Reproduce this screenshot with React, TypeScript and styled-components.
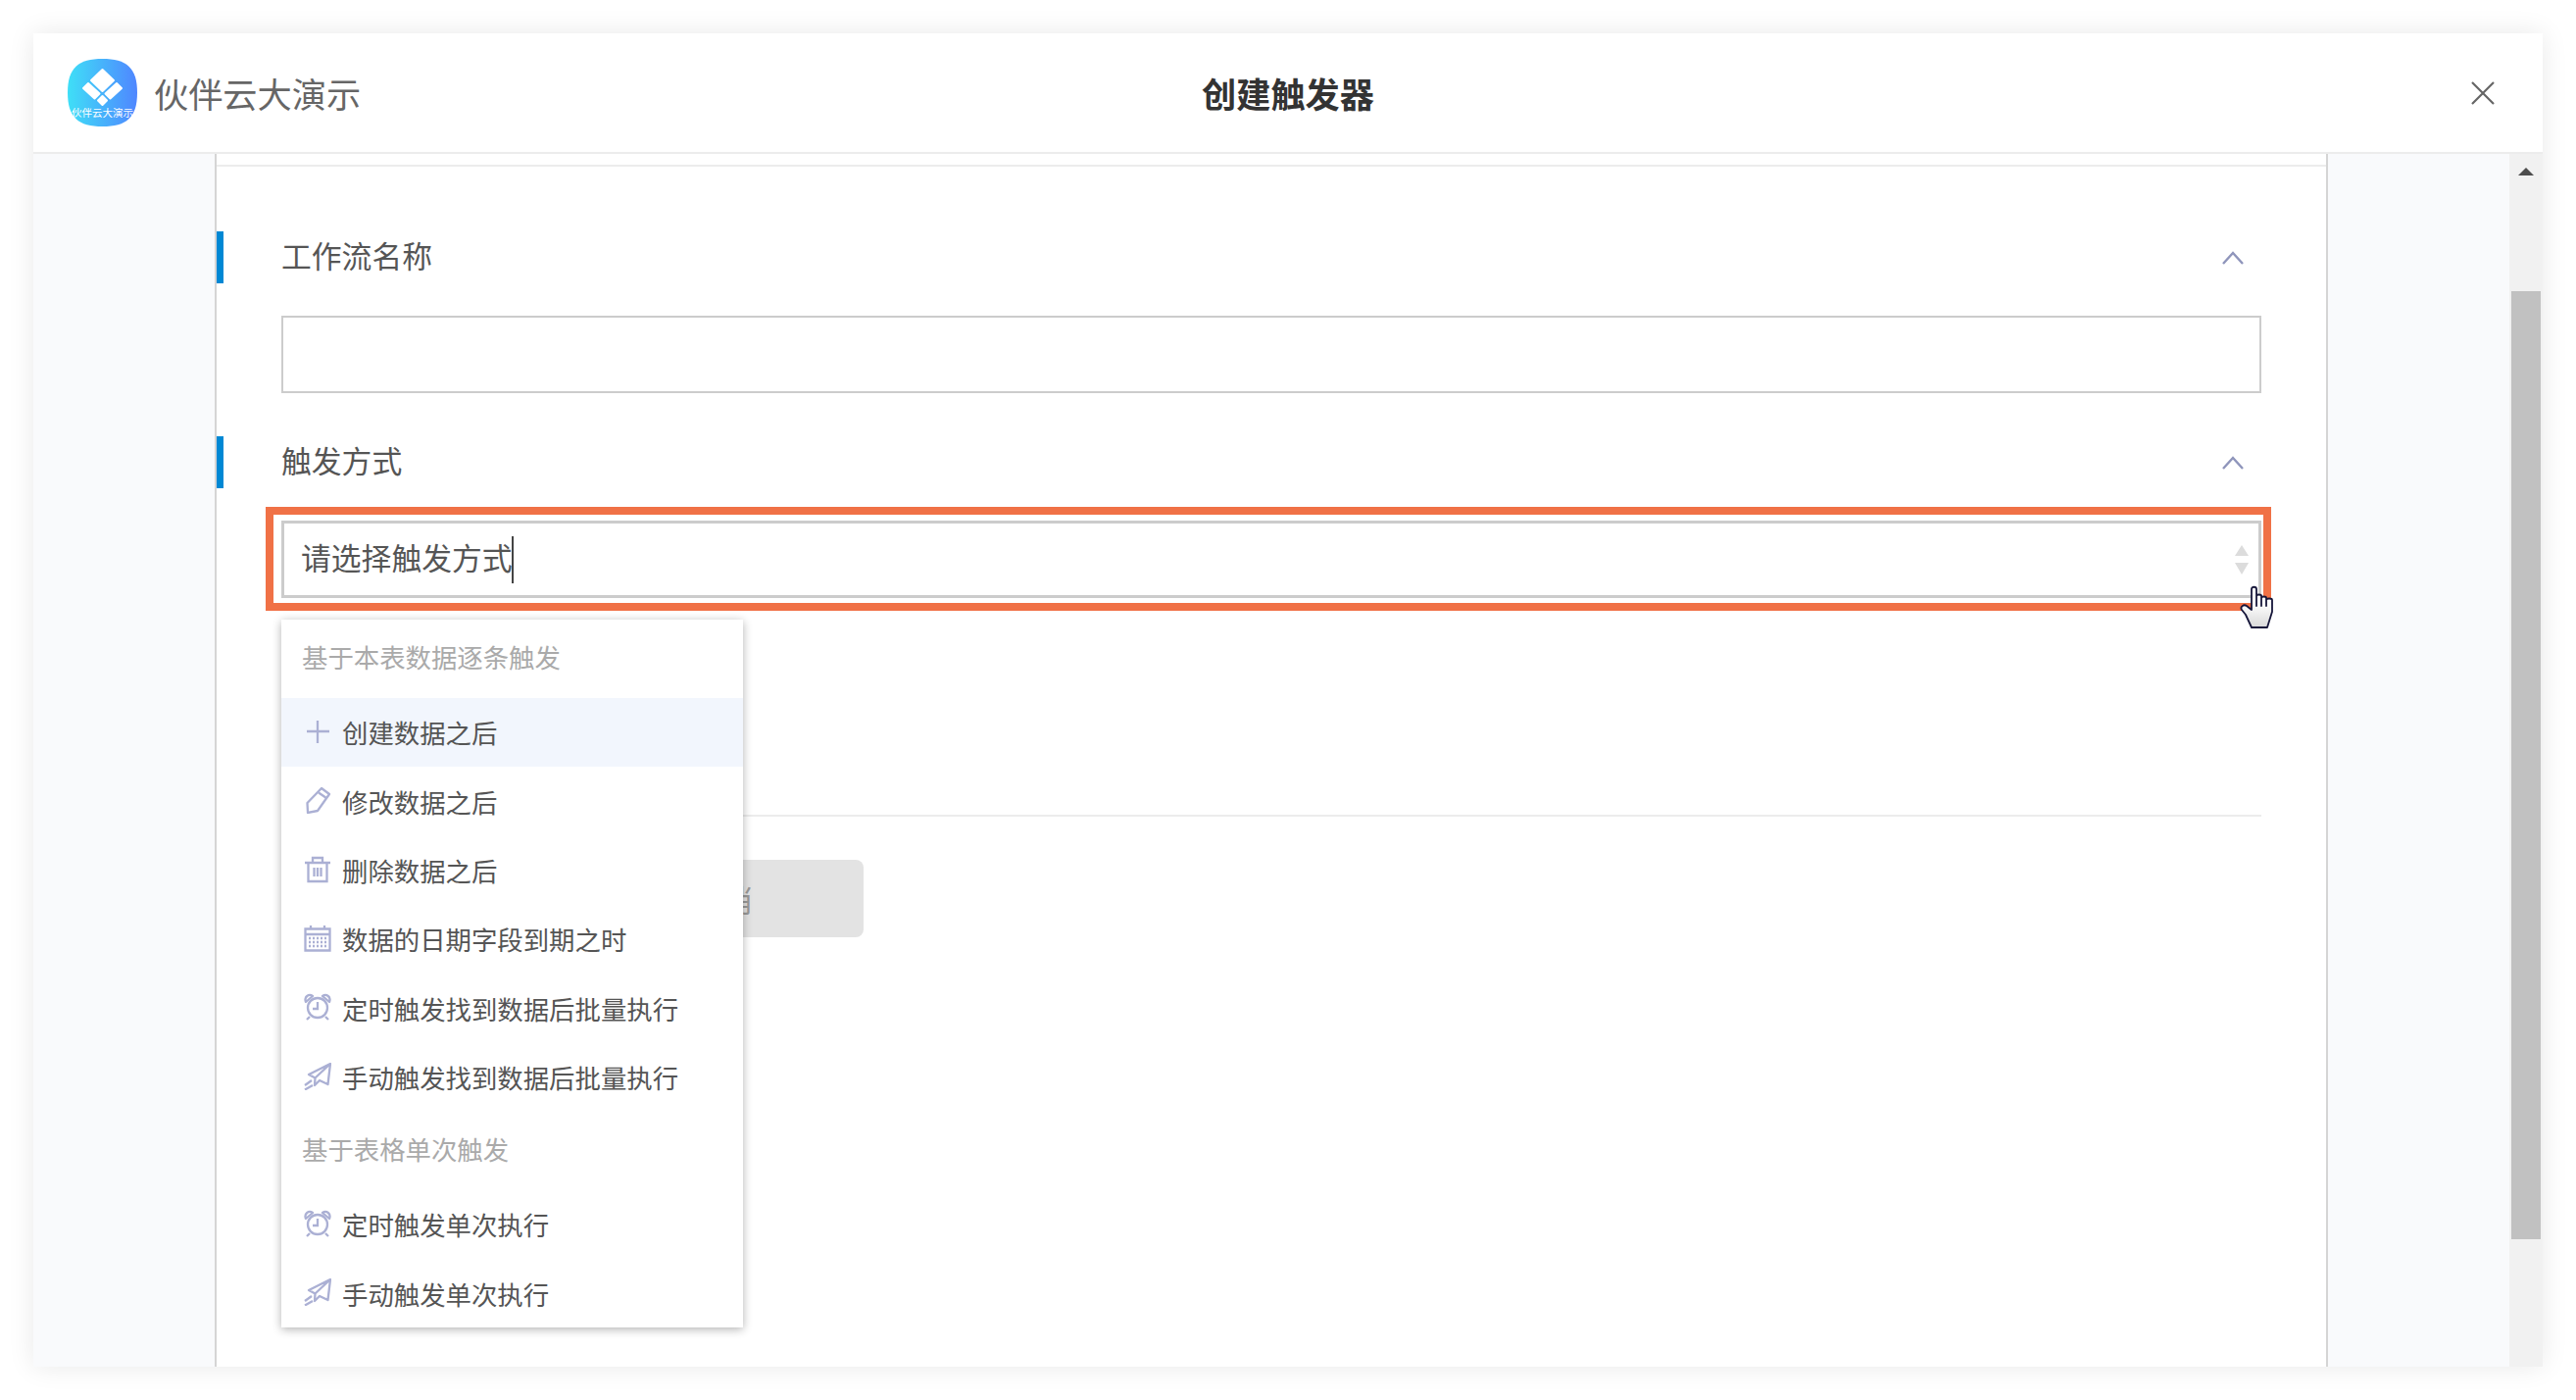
import React from 'react';
import styled, { createGlobalStyle } from 'styled-components';

const GlobalStyle = createGlobalStyle`
  html, body { margin: 0; padding: 0; background: #fff; }
  body { font-family: "Noto Sans CJK SC", "Liberation Sans", sans-serif; overflow: hidden; }
`;

const Page = styled.div`
  box-sizing: border-box;
  width: 2628px;
  height: 1428px;
  padding: 34px;
  overflow: hidden;
`;
const Win = styled.div`
  display: flex;
  flex-direction: column;
  height: 1360px;
  background: #fff;
  box-shadow: 0 0 26px rgba(0, 0, 0, 0.09);
`;
const Header = styled.header`
  box-sizing: border-box;
  height: 123px;
  flex: none;
  display: grid;
  grid-template-columns: 1fr auto 1fr;
  align-items: center;
  padding: 0 49px;
  border-bottom: 2px solid #ececec;
`;
const Brand = styled.div`
  display: flex;
  align-items: center;
  gap: 17px;
  margin-left: -14px;
  font-size: 35.2px;
  color: #666;
`;
const Title = styled.h1`
  margin: 0;
  font-size: 35.2px;
  font-weight: 700;
  color: #333;
`;
const CloseBtn = styled.div`
  justify-self: end;
  display: flex;
`;
const Body = styled.div`
  flex: 1;
  min-height: 0;
  display: flex;
`;
const Canvas = styled.main`
  flex: 1;
  background: #f9fafc;
  padding: 0 185px;
  overflow: hidden;
`;
const Panel = styled.div`
  box-sizing: border-box;
  height: 100%;
  background: #fff;
  border-left: 2px solid #d5d5d5;
  border-right: 2px solid #d5d5d5;
  padding-top: 11px;
`;
const PanelInner = styled.div`
  border-top: 2px solid #ececec;
  padding: 66px 66px 0 66px;
`;
const SectionHead = styled.div`
  height: 53px;
  margin-left: -66px;
  padding: 0 18px 0 59px;
  border-left: 7px solid #0088d4;
  display: flex;
  align-items: center;
  justify-content: space-between;
  font-size: 30.8px;
  color: #555;
`;
const SectionTitle = styled.span`
  padding-bottom: 6px;
`;
const TextBox = styled.div`
  box-sizing: border-box;
  height: 79px;
  margin: 33px 0 44px;
  border: 2px solid #ccc;
`;
const SelectBox = styled.div`
  position: relative;
  box-sizing: border-box;
  height: 79px;
  margin-top: 33px;
  border: 3px solid #ccc;
  display: flex;
  align-items: center;
  justify-content: space-between;
  padding: 0 10px 0 17px;
  font-size: 30.8px;
  color: #555;
`;
const Placeholder = styled.div`
  display: flex;
  align-items: center;
`;
const PlaceholderText = styled.span`
  padding-bottom: 6px;
`;
const Caret = styled.span`
  width: 2px;
  height: 48px;
  margin-left: -1px;
  background: #444;
`;
const Highlight = styled.div`
  position: absolute;
  left: -19px;
  right: -13px;
  top: -17px;
  bottom: -16px;
  border: 8px solid #f07146;
  pointer-events: none;
`;
const Hand = styled.svg`
  position: absolute;
  right: -17px;
  bottom: -34px;
`;
const Dropdown = styled.div`
  position: absolute;
  left: -3px;
  top: 98px;
  width: 471px;
  background: #fff;
  box-shadow: 0 2px 9px rgba(0, 0, 0, 0.3);
  z-index: 2;
`;
const GroupLabel = styled.div`
  height: 79.6px;
  line-height: 76px;
  padding-left: 21px;
  font-size: 26.4px;
  color: #aaa;
`;
const Item = styled.div<{ $active?: boolean }>`
  height: 70.4px;
  display: flex;
  align-items: center;
  padding-left: 23px;
  font-size: 26.4px;
  color: #555;
  background: ${p => (p.$active ? '#f2f6fd' : '#fff')};
`;
const ItemIcon = styled.svg`
  width: 28px;
  height: 28px;
  margin-right: 11px;
  margin-top: -2px;
  flex: none;
  fill: none;
  stroke: #abb0d4;
  stroke-width: 2.3;
`;
const Divider = styled.div`
  height: 2px;
  margin-top: 221px;
  background: #ececec;
`;
const Buttons = styled.div`
  display: flex;
  padding-left: 306px;
  margin-top: 44px;
`;
const Btn = styled.div`
  width: 288px;
  height: 79px;
  border-radius: 8px;
  display: flex;
  align-items: center;
  justify-content: center;
  font-size: 30.8px;
  color: #999;
  background: #e3e3e3;
`;
const Track = styled.div`
  width: 34px;
  flex: none;
  background: #f1f1f1;
  padding: 14px 2px 0;
  box-sizing: border-box;
  display: flex;
  flex-direction: column;
  align-items: center;
`;
const ArrowUp = styled.div`
  width: 0;
  height: 0;
  border-left: 8px solid transparent;
  border-right: 8px solid transparent;
  border-bottom: 8px solid #4d4d4d;
`;
const Thumb = styled.div`
  width: 30px;
  height: 967px;
  margin-top: 118px;
  background: #c1c1c1;
`;

const Logo = () => (
  <svg width="71" height="69" viewBox="0 0 71 69">
    <defs>
      <linearGradient id="logoFill" x1="0" x2="1" y1="0" y2="0">
        <stop offset="0" stopColor="#3fdff7" />
        <stop offset="1" stopColor="#4f86ff" />
      </linearGradient>
    </defs>
    <path d="M35.500 0C60 0 71 9 71 34.500S60 69 35.500 69 0 60 0 34.500 11 0 35.500 0Z" fill="url(#logoFill)" />
    <g fill="#fff" stroke="#fff" strokeWidth="2" strokeLinejoin="round">
      <path d="M35.500 11L47 22 35.500 33 24 22Z" />
      <path d="M21 25L32.500 35.500 27.500 40.500 16 30Z" />
      <path d="M50 25L38.500 35.500 43.500 40.500 55 30Z" />
      <path d="M35.500 38L40 42.500 35.500 47 31 42.500Z" />
    </g>
    <text x="35.500" y="59" fontSize="10.500" fill="#fff" textAnchor="middle" fontFamily="Noto Sans CJK SC, sans-serif">伙伴云大演示</text>
  </svg>
);

const Chevron = () => (
  <svg width="22" height="14" viewBox="0 0 22 14" fill="none" stroke="#8f95bb" strokeWidth="2.400">
    <path d="M1 13L11 2L21 13" />
  </svg>
);

const SortArrows = () => (
  <svg width="14" height="30" viewBox="0 0 14 30" fill="#dcdcdc">
    <path d="M7 0L14 11H0Z" />
    <path d="M0 18H14L7 30Z" />
  </svg>
);

const PlusIcon = () => (
  <ItemIcon viewBox="0 0 28 28"><path d="M14 3V26M3 14H26" /></ItemIcon>
);
const PenIcon = () => (
  <ItemIcon viewBox="0 0 28 28">
    <path d="M18 2L26 8 14 25 4 27 3.500 17Z" strokeLinejoin="round" />
    <path d="M15 6.500L23 12" />
  </ItemIcon>
);
const TrashIcon = () => (
  <ItemIcon viewBox="0 0 28 28">
    <path d="M1 7H27M9 6V2H19V6M4.500 7V26H23.500V7" />
    <path d="M10.500 12V21M14 12V21M17.500 12V21" />
  </ItemIcon>
);
const CalendarIcon = () => (
  <ItemIcon viewBox="0 0 28 28">
    <path d="M1.500 4.500H26.500V26.500H1.500ZM1.500 10H26.500M7 1V5M21 1V5" />
    <path d="M5 14H23M5 18H23M5 22H23" strokeDasharray="2 2" />
  </ItemIcon>
);
const AlarmIcon = () => (
  <ItemIcon viewBox="0 0 28 28">
    <circle cx="14" cy="15" r="10" />
    <path d="M14 9V16H9M6 24L3 27M22 24L25 27" />
    <path d="M2 9C0 4 5 0 9 3ZM26 9C28 4 23 0 19 3Z" strokeLinejoin="round" />
  </ItemIcon>
);
const PlaneIcon = () => (
  <ItemIcon viewBox="0 0 28 28">
    <path d="M27 1L24.500 22 16 18 11 23 11.500 15.500 5 12ZM27 1L11.500 15.500" strokeLinejoin="round" />
    <path d="M8 18L1 23M9 23L1 27.500" />
  </ItemIcon>
);

const HandCursor = () => (
  <Hand width="36" height="44" viewBox="0 0 36 44">
    <defs>
      <linearGradient id="handFill" x1="0" x2="0" y1="0" y2="1">
        <stop offset="0.400" stopColor="#fff" />
        <stop offset="1" stopColor="#d8d8d8" />
      </linearGradient>
    </defs>
    <path
      d="M12 4C12 1 17 1 17 4V21V11C17 9 22 9 22 11V21V13C22 11 27 11 27 13V21V15C27 13 33 13 33 15V27L28 43H12L6 30L2 25C0 22 4 19 7 21L12 25Z"
      fill="url(#handFill)"
      stroke="#16163a"
      strokeWidth="1.800"
      strokeLinejoin="round"
    />
  </Hand>
);

const recordItems = [
  { icon: <PlusIcon />, label: '创建数据之后', active: true },
  { icon: <PenIcon />, label: '修改数据之后' },
  { icon: <TrashIcon />, label: '删除数据之后' },
  { icon: <CalendarIcon />, label: '数据的日期字段到期之时' },
  { icon: <AlarmIcon />, label: '定时触发找到数据后批量执行' },
  { icon: <PlaneIcon />, label: '手动触发找到数据后批量执行' },
];
const tableItems = [
  { icon: <AlarmIcon />, label: '定时触发单次执行' },
  { icon: <PlaneIcon />, label: '手动触发单次执行' },
];

export default function App() {
  return (
    <Page>
      <GlobalStyle />
      <Win>
        <Header>
          <Brand><Logo />伙伴云大演示</Brand>
          <Title>创建触发器</Title>
          <CloseBtn>
            <svg width="24" height="24" viewBox="0 0 24 24" stroke="#666" strokeWidth="2.200">
              <path d="M1 1L23 23M23 1L1 23" />
            </svg>
          </CloseBtn>
        </Header>
        <Body>
          <Canvas>
            <Panel>
              <PanelInner>
                <SectionHead><SectionTitle>工作流名称</SectionTitle><Chevron /></SectionHead>
                <TextBox />
                <SectionHead><SectionTitle>触发方式</SectionTitle><Chevron /></SectionHead>
                <SelectBox>
                  <Placeholder><PlaceholderText>请选择触发方式</PlaceholderText><Caret /></Placeholder>
                  <SortArrows />
                  <Highlight />
                  <HandCursor />
                  <Dropdown>
                    <GroupLabel>基于本表数据逐条触发</GroupLabel>
                    {recordItems.map(it => (
                      <Item key={it.label} $active={it.active}>{it.icon}{it.label}</Item>
                    ))}
                    <GroupLabel>基于表格单次触发</GroupLabel>
                    {tableItems.map(it => (
                      <Item key={it.label}>{it.icon}{it.label}</Item>
                    ))}
                  </Dropdown>
                </SelectBox>
                <Divider />
                <Buttons>
                  <Btn>取消</Btn>
                </Buttons>
              </PanelInner>
            </Panel>
          </Canvas>
          <Track>
            <ArrowUp />
            <Thumb />
          </Track>
        </Body>
      </Win>
    </Page>
  );
}
